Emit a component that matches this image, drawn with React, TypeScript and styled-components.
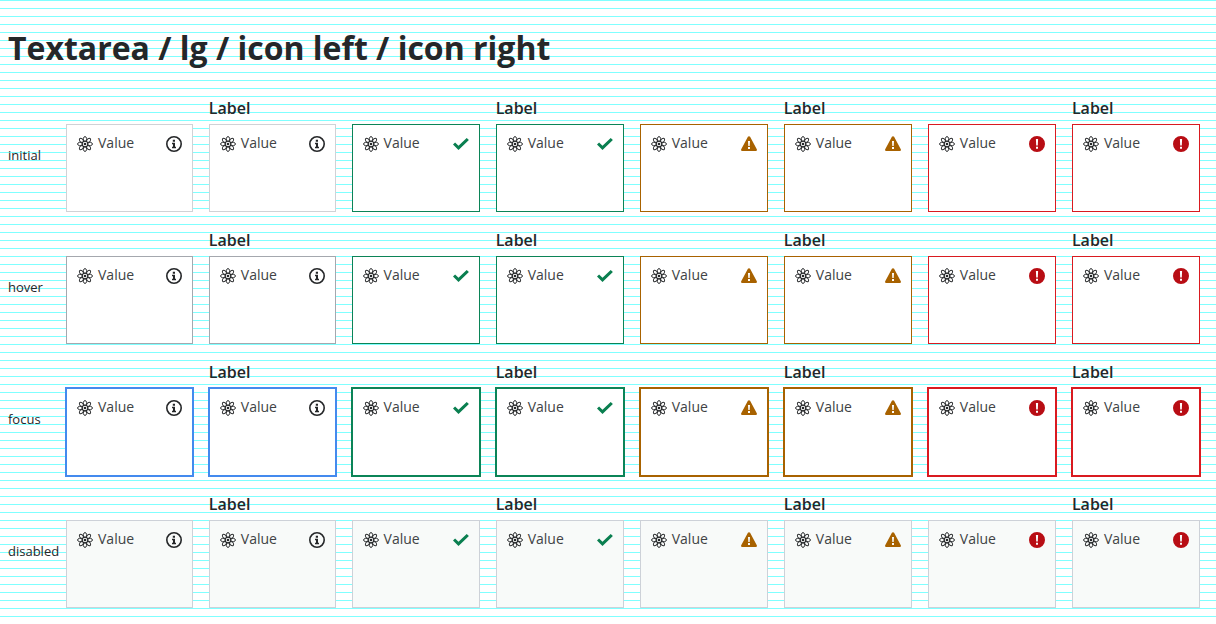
import React, { useId } from 'react';
import styled, { createGlobalStyle, css } from 'styled-components';

type State = 'initial' | 'hover' | 'focus' | 'disabled';
type Status = 'neutral' | 'success' | 'warning' | 'error';

const states: State[] = ['initial', 'hover', 'focus', 'disabled'];
const statuses: Status[] = ['neutral', 'success', 'warning', 'error'];

const borders: Record<Status, Record<State, string>> = {
  neutral: { initial: '#d0d2d6', hover: '#a4a8ae', focus: '#448aee', disabled: '#cdd1d8' },
  success: { initial: '#0b8457', hover: '#0b8457', focus: '#0b8457', disabled: '#cdd1d8' },
  warning: { initial: '#a86200', hover: '#a86200', focus: '#a86200', disabled: '#cdd1d8' },
  error: { initial: '#d91a20', hover: '#d91a20', focus: '#d91a20', disabled: '#cdd1d8' },
};

const iconColors: Record<Status, string> = {
  neutral: '#252729',
  success: '#0a7f50',
  warning: '#a86200',
  error: '#b80d14',
};

const GlobalStyle = createGlobalStyle`
  *, *::before, *::after { box-sizing: border-box; }
  html {
    min-height: 100%;
    background: #fff linear-gradient(#80ffff 1px, transparent 1px) 0 0 / 8px 8px;
  }
  body {
    margin: 0;
    padding: 0 8px;
    color: #252729;
    font-family: "Open Sans", sans-serif;
  }
`;

const Title = styled.h1`
  margin: 0;
  padding: 24px 0 16px;
  font-size: 32px;
  line-height: 48px;
  font-weight: 700;
`;

const Matrix = styled.table`
  width: 100%;
  table-layout: fixed;
  border-collapse: collapse;
`;

const StateName = styled.th`
  width: 50px;
  padding: 2px 0 0;
  font-size: 13px;
  line-height: 20px;
  font-weight: 400;
  text-align: left;
  white-space: nowrap;
`;

const Cell = styled.td<{ $narrow: boolean }>`
  width: ${(p) => (p.$narrow ? '11.9%' : 'auto')};
  padding: 8px;
  vertical-align: bottom;
`;

const Label = styled.label`
  display: block;
  margin-bottom: 4px;
  font-size: 16px;
  line-height: 24px;
  font-weight: 600;
`;

const Field = styled.div`
  position: relative;
`;

const Control = styled.textarea<{ $border: string; $ring: boolean }>`
  display: block;
  width: 100%;
  height: 88px;
  margin: 0;
  padding: 6px 31px;
  border: 1px solid ${(p) => p.$border};
  border-radius: 0;
  outline: none;
  background: #fff;
  color: #404345;
  font: 400 14px/24px "Open Sans", sans-serif;
  resize: none;
  ${(p) => p.$ring && css`box-shadow: 0 0 0 1px ${p.$border};`}

  &:disabled {
    background: #f8faf9;
    opacity: 1;
  }
`;

const IconSlot = styled.span<{ $side: 'left' | 'right'; $color: string }>`
  position: absolute;
  top: 12px;
  ${(p) => p.$side}: 11px;
  display: flex;
  color: ${(p) => p.$color};
  pointer-events: none;

  svg {
    width: 16px;
    height: 16px;
  }
`;

const AtomIcon = () => (
  <svg viewBox="0 0 16 16" fill="none" stroke="currentColor" aria-hidden="true">
    {[0, 45, 90, 135, 180, 225, 270, 315].map((angle) => (
      <path
        key={angle}
        d="M6.5 5.7C5.7 3.6 6.5.5 8 .5s2.3 3.1 1.5 5.2"
        strokeWidth="0.95"
        transform={`rotate(${angle} 8 8)`}
      />
    ))}
    <circle cx="8" cy="8" r="2.8" strokeWidth="1.1" />
    <circle cx="8" cy="8" r="1.3" fill="currentColor" stroke="none" />
  </svg>
);

const InfoIcon = () => (
  <svg viewBox="0 0 16 16" fill="currentColor" aria-hidden="true">
    <circle cx="8" cy="8" r="7.2" fill="none" stroke="currentColor" strokeWidth="1.6" />
    <path d="M6.8 3.8H9v2H6.8zM6 6.8h3v4h1v1.5H6v-1.5h1V8.3H6z" />
  </svg>
);

const CheckIcon = () => (
  <svg viewBox="0 0 16 16" fill="currentColor" aria-hidden="true">
    <path d="M0 8.6 2.1 6.5 5.5 9.8 13.7 2 15.9 4.1 5.5 14.1z" />
  </svg>
);

const WarningIcon = () => (
  <svg viewBox="0 0 16 16" fill="currentColor" aria-hidden="true">
    <path
      fillRule="evenodd"
      d="M6.9.8a1.25 1.25 0 0 1 2.2 0l6.7 12.4A1.25 1.25 0 0 1 14.7 15H1.3a1.25 1.25 0 0 1-1.1-1.8zM7 5l.3 5h1.4L9 5zM7 11v2h2v-2z"
    />
  </svg>
);

const ErrorIcon = () => (
  <svg viewBox="0 0 16 16" fill="currentColor" aria-hidden="true">
    <path
      fillRule="evenodd"
      d="M8 0a8 8 0 1 1 0 16A8 8 0 0 1 8 0zM6.9 3l.3 6.4h1.6L9.1 3zM7 10.7v2.1h2v-2.1z"
    />
  </svg>
);

const statusIcons: Record<Status, React.FC> = {
  neutral: InfoIcon,
  success: CheckIcon,
  warning: WarningIcon,
  error: ErrorIcon,
};

interface TextareaProps {
  state: State;
  status: Status;
  label?: string;
}

const Textarea = ({ state, status, label }: TextareaProps) => {
  const id = useId();
  const StatusIcon = statusIcons[status];
  return (
    <>
      {label && <Label htmlFor={id}>{label}</Label>}
      <Field>
        <Control
          id={id}
          defaultValue="Value"
          aria-label={label ? undefined : `${status} ${state}`}
          aria-invalid={status === 'error' || undefined}
          disabled={state === 'disabled'}
          $border={borders[status][state]}
          $ring={state === 'focus'}
        />
        <IconSlot $side="left" $color="#252729">
          <AtomIcon />
        </IconSlot>
        <IconSlot $side="right" $color={iconColors[status]}>
          <StatusIcon />
        </IconSlot>
      </Field>
    </>
  );
};

export default function App() {
  return (
    <main>
      <GlobalStyle />
      <Title>Textarea / lg / icon left / icon right</Title>
      <Matrix>
        <tbody>
          {states.map((state) => (
            <tr key={state}>
              <StateName scope="row">{state}</StateName>
              {statuses.map((status) => (
                <React.Fragment key={status}>
                  <Cell $narrow={status === 'neutral'}>
                    <Textarea state={state} status={status} />
                  </Cell>
                  <Cell $narrow={status === 'neutral'}>
                    <Textarea state={state} status={status} label="Label" />
                  </Cell>
                </React.Fragment>
              ))}
            </tr>
          ))}
        </tbody>
      </Matrix>
    </main>
  );
}
